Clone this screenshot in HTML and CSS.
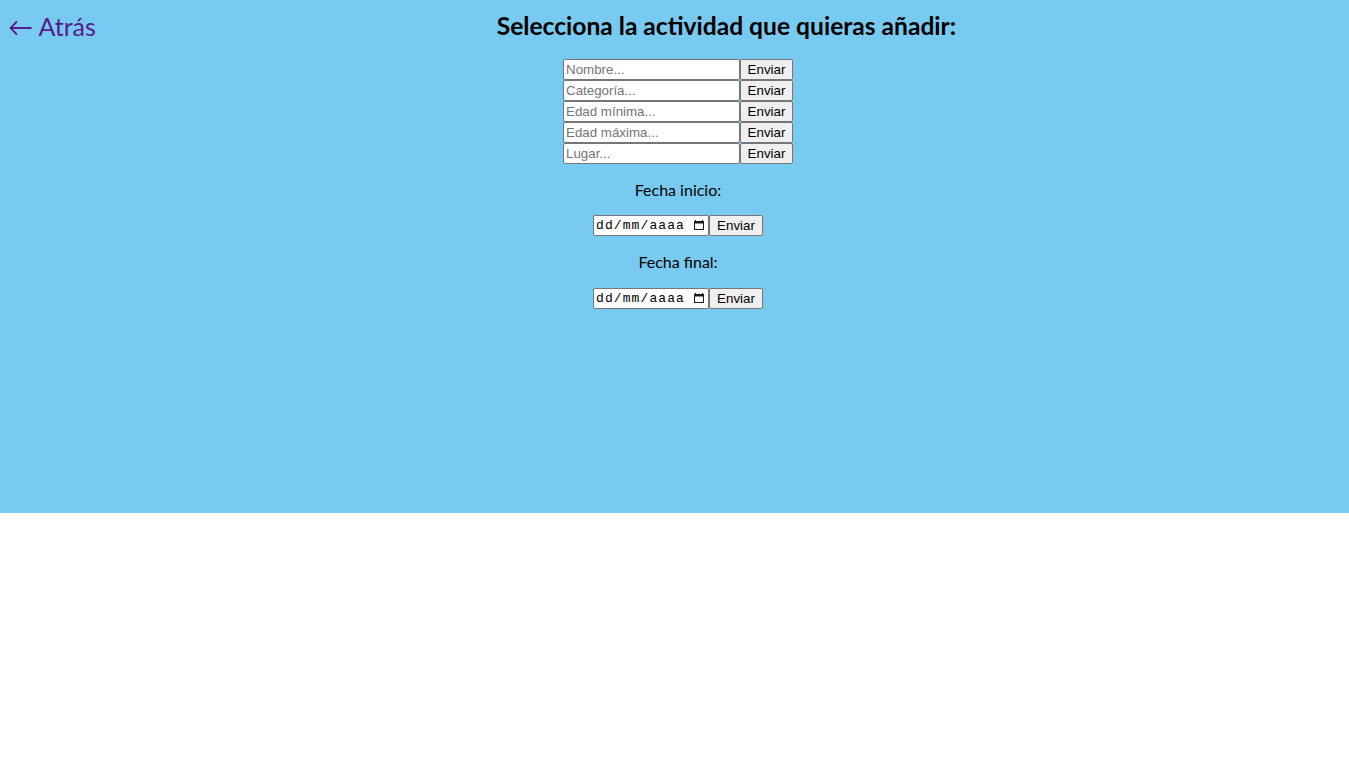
FILE: index.html
```html
<!DOCTYPE html>
<html lang="es">
<head>
<meta charset="utf-8">
<title>Añadir actividad</title>
<link rel="stylesheet" href="styles.css">
</head>
<body>
<div class="page">
  <header class="header">
    <a class="back" href="#">&larr; Atrás</a>
    <h1 class="title">Selecciona la actividad que quieras añadir:</h1>
  </header>
  <form class="form">
    <div class="row"><input class="text" type="text" placeholder="Nombre..."><button class="send" type="button">Enviar</button></div>
    <div class="row"><input class="text" type="text" placeholder="Categoría..."><button class="send" type="button">Enviar</button></div>
    <div class="row"><input class="text" type="text" placeholder="Edad mínima..."><button class="send" type="button">Enviar</button></div>
    <div class="row"><input class="text" type="text" placeholder="Edad máxima..."><button class="send" type="button">Enviar</button></div>
    <div class="row"><input class="text" type="text" placeholder="Lugar..."><button class="send" type="button">Enviar</button></div>
    <p class="label">Fecha inicio:</p>
    <div class="row">
      <span class="date-field">
        <input class="date" type="text" placeholder="dd/mm/aaaa">
        <svg class="cal" width="12" height="12" viewBox="0 0 12 12" aria-hidden="true"><path d="M2 1v1H1.5A.5.5 0 0 0 1 2.5v8a.5.5 0 0 0 .5.5h9a.5.5 0 0 0 .5-.5v-8a.5.5 0 0 0-.5-.5H10V1H9v1H3V1zM2 4.5h8V10H2z" fill="#1a1a1a"/></svg>
      </span><button class="send date-send" type="button">Enviar</button>
    </div>
    <p class="label label-final">Fecha final:</p>
    <div class="row">
      <span class="date-field">
        <input class="date" type="text" placeholder="dd/mm/aaaa">
        <svg class="cal" width="12" height="12" viewBox="0 0 12 12" aria-hidden="true"><path d="M2 1v1H1.5A.5.5 0 0 0 1 2.5v8a.5.5 0 0 0 .5.5h9a.5.5 0 0 0 .5-.5v-8a.5.5 0 0 0-.5-.5H10V1H9v1H3V1zM2 4.5h8V10H2z" fill="#1a1a1a"/></svg>
      </span><button class="send date-send" type="button">Enviar</button>
    </div>
  </form>
</div>
</body>
</html>
```

FILE: styles.css
```css
html, body {
  margin: 0;
  padding: 0;
  background: #ffffff;
}

.page {
  background: #79caf0;
  height: 513px;
  padding-left: 7px;
  box-sizing: border-box;
  font-family: Lato, "Open Sans", sans-serif;
  color: #000;
}

.header {
  display: flex;
  align-items: flex-start;
  height: 59px;
  padding-left: 1px;
}

.back {
  font-size: 25px;
  line-height: 32px;
  padding-top: 10px;
  color: #551a8b;
  text-decoration: none;
  white-space: nowrap;
}

.title {
  flex: 1;
  margin: 0;
  padding-top: 11px;
  padding-left: 8px;
  font-size: 24.6px;
  line-height: 30px;
  font-weight: 700;
  text-align: center;
}

.form {
  display: flex;
  flex-direction: column;
  align-items: center;
  margin: 0;
}

.row {
  display: flex;
  height: 21px;
}

.text,
.date {
  box-sizing: border-box;
  display: block;
  height: 21px;
  margin: 0;
  padding: 1px 2px;
  border: 1px solid #767676;
  border-radius: 2px;
  background: #fff;
  font-family: Arial, "Liberation Sans", sans-serif;
  font-size: 13.33px;
  color: #000;
}

.text {
  width: 177px;
}

.text::placeholder {
  color: #757575;
}

.date-field {
  position: relative;
  display: block;
  width: 116px;
  height: 21px;
}

.date {
  width: 116px;
  padding: 1px 18px 1px 2px;
  font-family: "Liberation Mono", "DejaVu Sans Mono", monospace;
  font-size: 13px;
  letter-spacing: 1.1px;
}

.date::placeholder {
  color: #000;
}

.cal {
  position: absolute;
  right: 4px;
  top: 4px;
}

.send {
  box-sizing: border-box;
  width: 53px;
  height: 21px;
  margin: 0;
  padding: 1px 6px;
  border: 1px solid #767676;
  border-radius: 2px;
  background: #efefef;
  color: #000;
  font-family: Arial, "Liberation Sans", sans-serif;
  font-size: 13.33px;
}

.date-send {
  width: 54px;
}

.label {
  margin: 16px 0;
  font-size: 16px;
  line-height: 19px;
}

.label-final {
  margin-bottom: 17px;
}
```
